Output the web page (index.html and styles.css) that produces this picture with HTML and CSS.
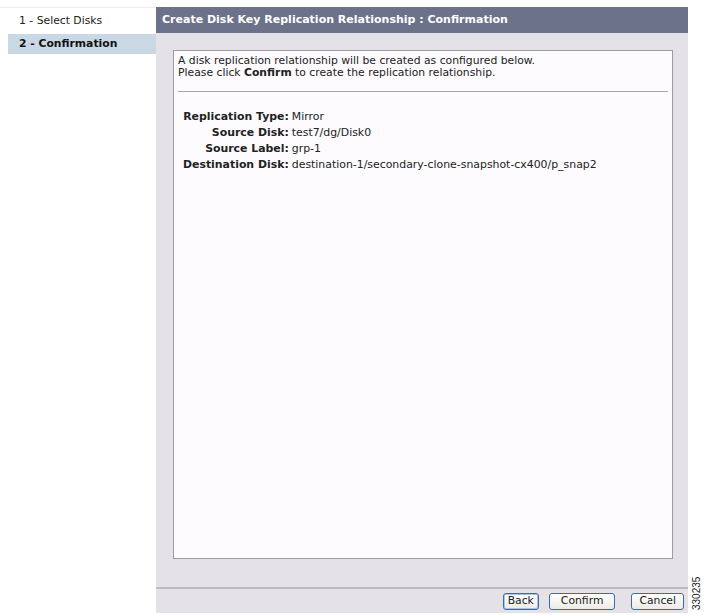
FILE: index.html
```html
<!DOCTYPE html>
<html lang="en">
<head>
  <meta charset="UTF-8" />
  <title>Create Disk Key Replication Relationship</title>
  <link rel="stylesheet" href="styles.css">
</head>
<body>
  <div class="page">
    <div class="wizard-nav">
      <div class="step">1 - Select Disks</div>
      <div class="step active">2 - Confirmation</div>
    </div>

    <div class="wizard-main">
      <div class="title-bar">Create Disk Key Replication Relationship : Confirmation</div>
      <div class="panel">
        <div class="content-box">
          <p class="intro">A disk replication relationship will be created as configured below.<br>
          Please click <b>Confirm</b> to create the replication relationship.</p>
          <hr class="divider">
          <table class="summary">
            <tr><th>Replication Type:</th><td>Mirror</td></tr>
            <tr><th>Source Disk:</th><td>test7/dg/Disk0</td></tr>
            <tr><th>Source Label:</th><td>grp-1</td></tr>
            <tr><th>Destination Disk:</th><td>destination-1/secondary-clone-snapshot-cx400/p_snap2</td></tr>
          </table>
        </div>
        <div class="footer">
          <button class="btn btn-focus">Back</button>
          <button class="btn btn-wide">Confirm</button>
          <button class="btn btn-cancel">Cancel</button>
        </div>
      </div>
    </div>
  </div>
  <div class="fig-id">330235</div>
</body>
</html>
```

FILE: styles.css
```css
body {
  margin: 0;
  background: #fff;
  font-family: "DejaVu Sans", Verdana, sans-serif;
  font-size: 11px;
  color: #222;
}

.page {
  display: flex;
  padding-top: 6px;
  border-top: 1px solid #fff;
}

.wizard-nav {
  width: 148px;
  padding-left: 8px;
  border-top: 1px solid #eceef0;
}

.step {
  height: 20px;
  line-height: 20px;
  padding-left: 11px;
  font-size: 10.8px;
}

.step:first-child {
  height: 26px;
  line-height: 26px;
}

.step.active {
  background: #c9d8e4;
  font-weight: bold;
  color: #111;
}

.wizard-main {
  width: 532px;
}

.title-bar {
  height: 26px;
  line-height: 26px;
  background: #6b7289;
  color: #fff;
  font-weight: bold;
  font-size: 11px;
  padding-left: 6px;
}

.panel {
  background: #e4e2e6;
  height: 580px;
  padding: 17px 0 0 17px;
  box-sizing: border-box;
  display: flex;
  flex-direction: column;
}

.content-box {
  width: 500px;
  height: 509px;
  box-sizing: border-box;
  background: #fdfbfe;
  border: 1px solid #9c9ca0;
  padding: 4px 4px 0 4px;
}

.intro {
  margin: 0;
  line-height: 12px;
  font-size: 10.8px;
}

.divider {
  border: none;
  border-top: 1px solid #a8a8ac;
  margin: 12px 0 0 0;
}

.summary {
  border-collapse: collapse;
  margin-top: 17px;
  font-size: 10.9px;
}

.summary th {
  text-align: right;
  padding: 1px 3px 1px 5px;
  line-height: 14px;
  font-weight: bold;
}

.summary td {
  padding: 1px 0;
  line-height: 14px;
}

.footer {
  margin: 28px 0 0 -17px;
  border-top: 2px solid #bdbcc2;
  height: 24px;
  display: flex;
  justify-content: flex-end;
  align-items: center;
  padding-right: 4px;
}

.btn {
  font-family: "DejaVu Sans", Verdana, sans-serif;
  font-size: 10.8px;
  height: 17px;
  padding: 0 7px;
  margin-left: 10px;
  color: #222;
  background: linear-gradient(#ffffff, #ecebe6);
  border: 1px solid #3c6d9e;
  border-radius: 3px;
  line-height: 14px;
}

.btn-focus {
  box-shadow: inset 0 0 0 1px #a9c3e0;
  padding: 0 4px;
}

.btn-wide {
  padding: 0 11px;
}

.btn-cancel {
  margin-left: 16px;
}

.fig-id {
  position: absolute;
  left: 691px;
  top: 556px;
  width: 12px;
  height: 54px;
  writing-mode: vertical-rl;
  transform: rotate(180deg);
  font-family: "Liberation Sans", Arial, sans-serif;
  font-size: 10px;
  color: #222;
}
```
